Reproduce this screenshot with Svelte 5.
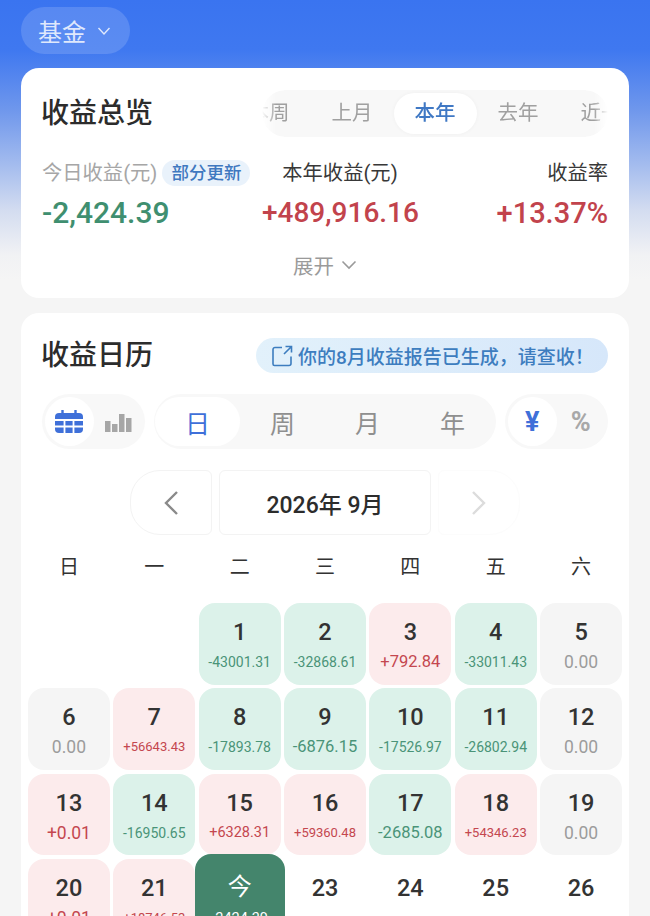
<script lang="ts">
  const weekdays = ["日", "一", "二", "三", "四", "五", "六"];

  const days = [
    null, null,
    { d: "1", v: "-43001.31" }, { d: "2", v: "-32868.61" }, { d: "3", v: "+792.84" }, { d: "4", v: "-33011.43" }, { d: "5", v: "0.00" },
    { d: "6", v: "0.00" }, { d: "7", v: "+56643.43" }, { d: "8", v: "-17893.78" }, { d: "9", v: "-6876.15" }, { d: "10", v: "-17526.97" }, { d: "11", v: "-26802.94" }, { d: "12", v: "0.00" },
    { d: "13", v: "+0.01" }, { d: "14", v: "-16950.65" }, { d: "15", v: "+6328.31" }, { d: "16", v: "+59360.48" }, { d: "17", v: "-2685.08" }, { d: "18", v: "+54346.23" }, { d: "19", v: "0.00" },
    { d: "20", v: "+0.01" }, { d: "21", v: "+18746.53" }, { d: "今", v: "-2424.39", today: true }, { d: "23" }, { d: "24" }, { d: "25" }, { d: "26" },
    { d: "27" }, { d: "28" }, { d: "29" }, { d: "30" }
  ];

  function tone(day) {
    if (day.today) return "today";
    if (!day.v) return "future";
    if (day.v.startsWith("-")) return "down";
    if (day.v.startsWith("+")) return "up";
    return "flat";
  }

  // the app shrinks long amounts to fit the cell; a minus is narrower than a plus
  function sizeClass(v) {
    const minus = v.startsWith("-");
    if (v.length >= 9) return minus ? "s14" : "s13";
    if (v.length === 8) return minus ? "s17" : "s15";
    if (v.length === 7) return "s16";
    return "s18";
  }
</script>

<div class="page">
  <button class="picker">
    <span>基金</span>
    <svg width="14" height="10" viewBox="0 0 14 10"><path d="M1.5 2 L7 8 L12.5 2" fill="none" stroke="currentColor" stroke-width="1.4" /></svg>
  </button>

  <section class="card overview">
    <div class="head">
      <h2>收益总览</h2>
      <div class="range">
        <div class="range-inner">
          <span>本周</span>
          <span>上月</span>
          <span class="on">本年</span>
          <span>去年</span>
          <span>近一年</span>
        </div>
      </div>
    </div>

    <div class="stats">
      <div class="label muted">今日收益(元)<em>部分更新</em></div>
      <div class="label mid">本年收益(元)</div>
      <div class="label end">收益率</div>
      <div class="big green">-2,424.39</div>
      <div class="big red mid long">+489,916.16</div>
      <div class="big red end rate">+13.37%</div>
    </div>

    <div class="expand">
      展开
      <svg width="16" height="10" viewBox="0 0 16 10"><path d="M1.5 1.5 L8 8 L14.5 1.5" fill="none" stroke="currentColor" stroke-width="1.6" /></svg>
    </div>
  </section>

  <section class="card calendar">
    <div class="head cal-head">
      <h2>收益日历</h2>
      <div class="notice">
        <svg width="24" height="24" viewBox="0 0 24 24" fill="none" stroke="currentColor" stroke-width="1.6">
          <path d="M12 3.5 H5 a2 2 0 0 0 -2 2 V20 a1.5 1.5 0 0 0 1.5 1.5 H19 a2 2 0 0 0 2 -2 V12.5" />
          <path d="M15.5 2.5 H21.5 V8.5 M21.5 2.5 L14 10" />
        </svg>
        <span>你的8月收益报告已生成，请查收！</span>
      </div>
    </div>

    <div class="toggles">
      <div class="pill small">
        <span class="opt on">
          <svg width="30" height="24" viewBox="0 0 30 24">
            <rect x="1" y="3" width="28" height="20" rx="4" fill="#3f70d9" />
            <path d="M8.5 0.5 V5 M21.5 0.5 V5" stroke="#3f70d9" stroke-width="2.4" stroke-linecap="round" />
            <path d="M1 10 H29 M1 16.5 H29 M10.5 10 V23 M19.5 10 V23" stroke="#fff" stroke-width="1.8" />
          </svg>
        </span>
        <span class="opt">
          <svg width="28" height="20" viewBox="0 0 28 20" fill="#a6a6a6">
            <rect x="1" y="9" width="5.5" height="11" />
            <rect x="8" y="12" width="5.5" height="8" />
            <rect x="15" y="2" width="5.5" height="18" />
            <rect x="22" y="6" width="5.5" height="14" />
          </svg>
        </span>
      </div>
      <div class="pill wide">
        <span class="opt on">日</span>
        <span class="opt">周</span>
        <span class="opt">月</span>
        <span class="opt">年</span>
      </div>
      <div class="pill small">
        <span class="opt on unit">¥</span>
        <span class="opt unit">%</span>
      </div>
    </div>

    <div class="month-nav">
      <button class="step prev" aria-label="上一月">
        <svg width="16" height="26" viewBox="0 0 16 26"><path d="M14 2 L3 13 L14 24" fill="none" stroke="#8a8a8a" stroke-width="2.4" /></svg>
      </button>
      <div class="month">2026年 9月</div>
      <button class="step next" aria-label="下一月">
        <svg width="16" height="26" viewBox="0 0 16 26"><path d="M2 2 L13 13 L2 24" fill="none" stroke="#dcdcdc" stroke-width="2.4" /></svg>
      </button>
    </div>

    <div class="grid weeks">
      {#each weekdays as w}
        <span>{w}</span>
      {/each}
    </div>

    <div class="grid days">
      {#each days as day}
        {#if day}
          <div class="cell {tone(day)}">
            <span class="num">{day.d}</span>
            {#if day.v}
              <span class="val {sizeClass(day.v)}">{day.v}</span>
            {/if}
          </div>
        {:else}
          <div class="cell"></div>
        {/if}
      {/each}
    </div>
  </section>
</div>

<style>
  :global(body) {
    margin: 0;
    background: #f5f5f5;
  }

  .page {
    height: 916px;
    overflow: hidden;
    box-sizing: border-box;
    padding: 7px 21px 0;
    background: linear-gradient(#3a74f0 0, #3f78f0 50px, #6f97ec 110px, #a4bcee 165px, #d3dcf0 210px, #f1f2f4 255px, #f5f5f5 280px);
    font-family: Roboto, "Noto Sans CJK SC", sans-serif;
    color: #2c2c2c;
  }

  .picker {
    display: flex;
    align-items: center;
    gap: 11px;
    width: 109px;
    height: 47px;
    padding: 0 0 0 17px;
    border: none;
    border-radius: 24px;
    background: rgba(255, 255, 255, 0.15);
    color: #dfe8fc;
    font-family: inherit;
    font-size: 24px;
  }

  .card {
    background: #fff;
    border-radius: 18px;
  }

  .overview {
    margin-top: 14px;
    height: 230px;
    box-sizing: border-box;
    padding: 22px 21px 0;
  }

  .head {
    display: flex;
    align-items: center;
    justify-content: space-between;
  }

  h2 {
    margin: 0 0 0 -1px;
    font-size: 28px;
    font-weight: 500;
    line-height: 38px;
  }

  .range {
    width: 346px;
    height: 47px;
    border-radius: 24px;
    background: #f8f8f8;
    overflow: hidden;
    -webkit-mask-image: linear-gradient(90deg, transparent 0, #000 14px, #000 332px, transparent 346px);
    mask-image: linear-gradient(90deg, transparent 0, #000 14px, #000 332px, transparent 346px);
  }

  .range-inner {
    display: flex;
    justify-content: center;
    align-items: center;
    height: 100%;
  }

  .range-inner span {
    flex: 0 0 83px;
    box-sizing: border-box;
    height: 41px;
    padding-left: 21px;
    border-radius: 21px;
    font-size: 20.5px;
    line-height: 41px;
    white-space: nowrap;
    overflow: hidden;
    color: #a0a0a0;
  }

  .range-inner .on {
    background: #fff;
    color: #3f78c4;
    font-weight: 500;
    box-shadow: 0 0 4px rgba(0, 0, 0, 0.04);
  }

  .stats {
    display: grid;
    grid-template-columns: 220px 156px 1fr;
    margin-top: 23px;
    row-gap: 9px;
    align-items: center;
  }

  .label {
    font-size: 20.3px;
    line-height: 26px;
    white-space: nowrap;
    color: #383838;
  }

  .label.muted {
    color: #a6a6a6;
  }

  .label em {
    display: inline-block;
    margin-left: 5px;
    padding: 0 9px;
    height: 26px;
    border-radius: 13px;
    background: #e9f2fb;
    color: #3f78c0;
    font-size: 17.5px;
    font-style: normal;
    font-weight: 500;
    line-height: 26px;
    vertical-align: top;
  }

  .mid {
    text-align: center;
  }

  .end {
    text-align: right;
  }

  .big {
    font-size: 30px;
    font-weight: 500;
    line-height: 36px;
    white-space: nowrap;
  }

  .big.long {
    font-size: 28px;
  }

  .big.rate {
    font-size: 29px;
  }

  .green {
    color: #3f8f70;
  }

  .red {
    color: #c2434c;
  }

  .expand {
    display: flex;
    align-items: center;
    justify-content: center;
    gap: 7px;
    margin-top: 20px;
    height: 28px;
    font-size: 20.5px;
    color: #9a9a9a;
  }

  .calendar {
    margin-top: 15px;
    padding: 25px 21px 40px;
  }

  .cal-head {
    height: 35px;
  }

  .notice {
    display: flex;
    align-items: center;
    gap: 4px;
    width: 352px;
    height: 35px;
    box-sizing: border-box;
    padding-left: 14px;
    border-radius: 18px;
    background: linear-gradient(90deg, #e2f1fb, #d6e7fa);
    color: #3d7dbf;
    font-size: 19px;
    font-weight: 500;
    white-space: nowrap;
  }

  .toggles {
    display: flex;
    gap: 9px;
    margin-top: 21px;
  }

  .pill {
    display: flex;
    align-items: center;
    height: 55px;
    box-sizing: border-box;
    padding: 3px;
    border-radius: 28px;
    background: #f8f8f8;
  }

  .pill.small {
    width: 103px;
  }

  .pill.wide {
    flex: 1;
    padding: 3px 1px;
  }

  .opt {
    flex: 1;
    height: 49px;
    display: flex;
    align-items: center;
    justify-content: center;
    border-radius: 25px;
    font-size: 25px;
    color: #8f8f8f;
  }

  .opt.on {
    background: #fff;
    color: #3f70d9;
  }

  .unit {
    font-size: 27px;
    font-weight: 700;
    color: #a8a8a8;
  }

  .month-nav {
    display: flex;
    justify-content: center;
    gap: 7px;
    margin-top: 21px;
  }

  .step,
  .month {
    height: 65px;
    box-sizing: border-box;
    display: flex;
    align-items: center;
    justify-content: center;
    background: #fff;
    border: 1px solid #f3f3f3;
    border-radius: 6px;
  }

  .step {
    width: 82px;
    padding: 0;
  }

  .prev {
    border-radius: 30px 6px 6px 30px;
  }

  .next {
    border-color: #fcfcfc;
    border-radius: 6px 30px 30px 6px;
  }

  .month {
    width: 212px;
    font-size: 23px;
    font-weight: 500;
    color: #2c2c2c;
  }

  .grid {
    display: grid;
    grid-template-columns: repeat(7, 1fr);
    column-gap: 3.5px;
    margin-left: -14px;
    margin-right: -14px;
  }

  .weeks {
    margin-top: 18px;
    height: 28px;
    font-size: 20px;
    line-height: 28px;
    text-align: center;
    color: #333;
  }

  .days {
    margin-top: 22px;
    grid-auto-rows: 81.5px;
    row-gap: 3.8px;
  }

  .cell {
    display: flex;
    flex-direction: column;
    align-items: center;
    border-radius: 16px;
    padding-top: 15px;
    box-sizing: border-box;
  }

  .num {
    font-size: 23.5px;
    font-weight: 500;
    line-height: 28px;
    color: #333;
  }

  .val {
    margin-top: 2px;
    height: 28px;
    line-height: 28px;
    white-space: nowrap;
  }

  .val.s13 {
    font-size: 13px;
  }

  .val.s14 {
    font-size: 14px;
  }

  .val.s15 {
    font-size: 14.5px;
  }

  .val.s16 {
    font-size: 16.5px;
  }

  .val.s17 {
    font-size: 16.5px;
  }

  .val.s18 {
    font-size: 17.5px;
  }

  .down {
    background: #dcf2ea;
  }

  .down .val {
    color: #4a9478;
  }

  .up {
    background: #fcebec;
  }

  .up .val {
    color: #c4474f;
  }

  .flat {
    background: #f5f5f5;
  }

  .flat .val {
    color: #9c9c9c;
  }

  .today {
    position: relative;
    z-index: 1;
    margin: -5px -4px 0;
    padding-top: 18px;
    background: #44856c;
  }

  .today .num,
  .today .val {
    color: #fff;
  }

  .today .num {
    font-size: 24px;
    font-weight: 400;
    line-height: 30px;
  }

  .today .val {
    margin-top: 3px;
    font-size: 14.5px;
  }
</style>
